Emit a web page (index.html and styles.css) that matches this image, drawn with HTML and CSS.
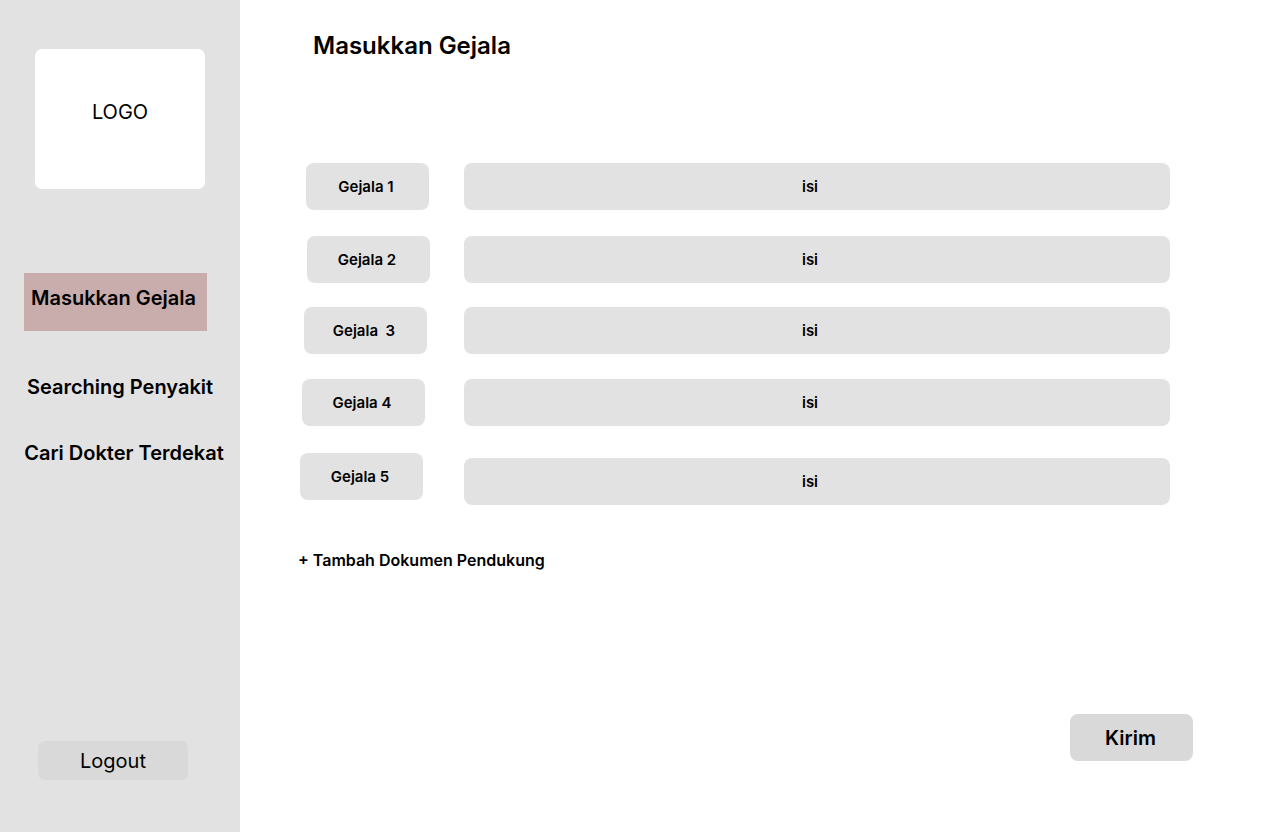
FILE: index.html
```html
<!DOCTYPE html>
<html lang="id">
<head>
<meta charset="utf-8">
<title>Masukkan Gejala</title>
<link rel="stylesheet" href="styles.css">
</head>
<body>
<div class="app">
  <aside class="sidebar">
    <div class="logo">LOGO</div>
    <nav class="nav">
      <a class="nav-item nav-item--active">Masukkan Gejala</a>
      <a class="nav-item nav-item--search">Searching Penyakit</a>
      <a class="nav-item nav-item--doctor">Cari Dokter Terdekat</a>
    </nav>
    <button class="logout">Logout</button>
  </aside>
  <main class="main">
    <h1 class="title">Masukkan Gejala</h1>
    <div class="rows">
      <div class="row row--1"><div class="label">Gejala 1</div><div class="field">isi</div></div>
      <div class="row row--2"><div class="label">Gejala 2</div><div class="field">isi</div></div>
      <div class="row row--3"><div class="label">Gejala&nbsp;&nbsp;3</div><div class="field">isi</div></div>
      <div class="row row--4"><div class="label">Gejala 4</div><div class="field">isi</div></div>
      <div class="row row--5"><div class="label">Gejala 5</div><div class="field">isi</div></div>
    </div>
    <div class="add-doc">+ Tambah Dokumen Pendukung</div>
    <div class="actions"><button class="submit">Kirim</button></div>
  </main>
</div>
</body>
</html>
```
FILE: styles.css
```css
* { box-sizing: border-box; }
html, body { margin: 0; padding: 0; }
body {
  font-family: Inter, "Noto Sans", sans-serif;
  color: #000;
  background: #fff;
}
.app {
  display: flex;
  width: 1280px;
  height: 832px;
}
.sidebar {
  width: 240px;
  flex: none;
  background: #e2e2e2;
  display: flex;
  flex-direction: column;
  padding: 49px 0 52px;
}
.logo {
  width: 170px;
  height: 140px;
  margin-left: 35px;
  background: #fff;
  border-radius: 7px;
  display: flex;
  justify-content: center;
  padding-top: 51px;
  font-size: 20px;
  line-height: 24px;
}
.nav {
  display: flex;
  flex-direction: column;
  margin-top: 84px;
}
.nav-item {
  font-size: 20px;
  font-weight: 600;
  line-height: 24px;
  white-space: nowrap;
}
.nav-item--active {
  width: 183px;
  height: 58px;
  margin-left: 24px;
  padding: 13px 7px;
  background: #c9adad;
}
.nav-item--search {
  margin-top: 44px;
  text-align: center;
}
.nav-item--doctor {
  margin-top: 42px;
  padding-left: 8px;
  text-align: center;
}
.logout {
  margin-top: auto;
  margin-left: 38px;
  width: 150px;
  height: 39px;
  border: 0;
  border-radius: 7px;
  background: #d9d9d9;
  font-family: inherit;
  font-size: 20px;
  font-weight: 400;
  color: #000;
  padding: 0;
}
.main {
  flex: 1;
  display: flex;
  flex-direction: column;
  padding: 31px 0 0 58px;
}
.title {
  margin: 0 0 0 15px;
  font-size: 24px;
  font-weight: 600;
  line-height: 29px;
}
.rows {
  margin-top: 103px;
  display: flex;
  flex-direction: column;
}
.row {
  display: grid;
  grid-template-columns: 166px 706px;
  align-items: start;
}
.row--2 { margin-top: 26px; }
.row--3 { margin-top: 24px; }
.row--4 { margin-top: 25px; }
.row--5 { margin-top: 27px; }
.label, .field {
  height: 47px;
  border-radius: 8px;
  background: #e2e2e2;
  display: flex;
  align-items: center;
  justify-content: center;
  font-size: 15px;
  font-weight: 600;
  white-space: nowrap;
}
.label { width: 123px; padding-right: 3px; }
.field { padding-right: 14px; }
.row--1 .label { margin-left: 8px; }
.row--2 .label { margin-left: 9px; }
.row--3 .label { margin-left: 6px; }
.row--4 .label { margin-left: 4px; }
.row--5 .label { margin-left: 2px; }
.row--5 .field { margin-top: 5px; }
.add-doc {
  margin-top: 46px;
  font-size: 16px;
  font-weight: 600;
  line-height: 19px;
}
.actions {
  display: flex;
  justify-content: flex-end;
  padding-right: 87px;
  margin-top: 144px;
}
.submit {
  width: 123px;
  height: 47px;
  border: 0;
  border-radius: 8px;
  background: #d9d9d9;
  font-family: inherit;
  font-size: 20px;
  font-weight: 600;
  color: #000;
  padding: 0 2px 0 0;
}
```
